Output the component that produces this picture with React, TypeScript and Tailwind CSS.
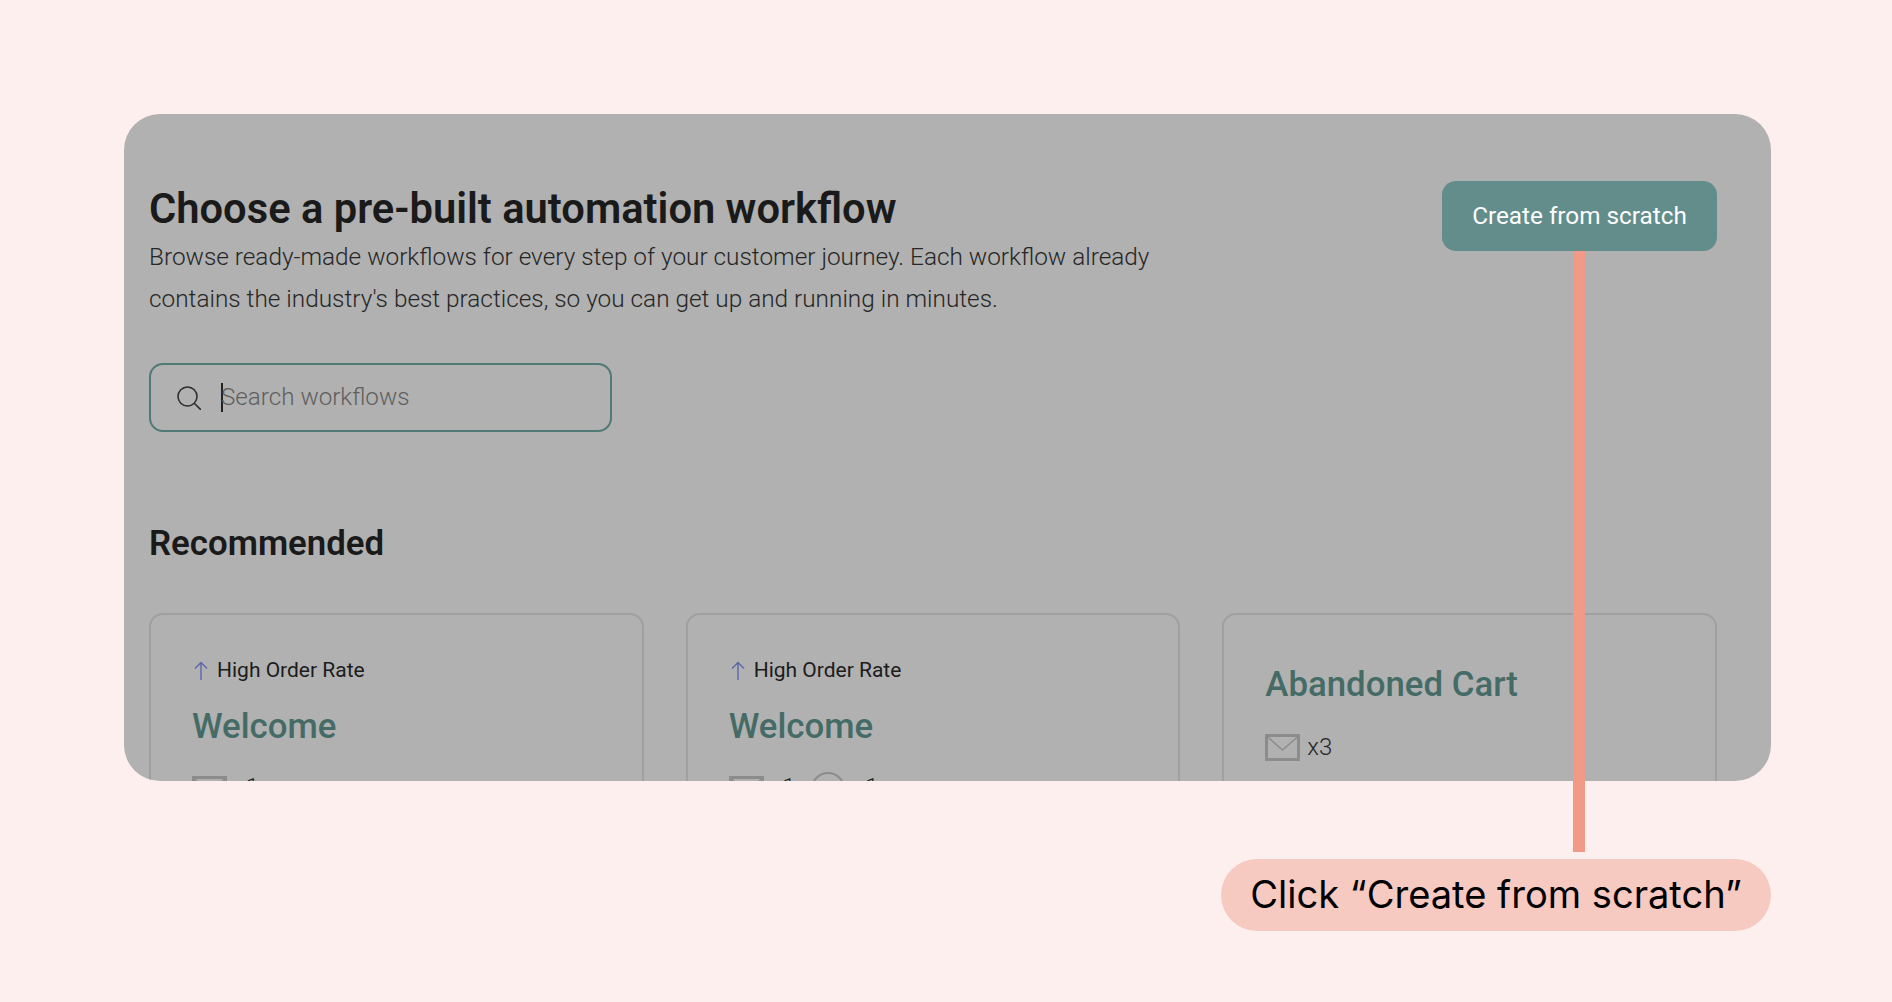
function MailIcon() {
  return (
    <svg width="35" height="27" viewBox="0 0 35 27" fill="none" stroke="#8c8c8c" className="shrink-0">
      <rect x="1.5" y="1.5" width="32" height="24" strokeWidth="3" />
      <path d="M2 2.5 L17.5 16 L33 2.5" strokeWidth="1.5" />
    </svg>
  );
}

function SearchIcon() {
  return (
    <svg width="24" height="24" viewBox="0 0 24 24" fill="none" stroke="#2e2e2e" strokeWidth="1.6" className="shrink-0">
      <circle cx="10.5" cy="10.5" r="9.5" />
      <path d="M17.5 17.5 L23.5 23.5" strokeLinecap="round" />
    </svg>
  );
}

function UpArrow() {
  return (
    <svg width="14" height="20" viewBox="0 0 14 20" fill="none" stroke="#5b67ab" strokeWidth="1.4" className="ml-[2px] shrink-0">
      <path d="M7 19 V1.5 M1 7.5 L7 1.5 L13 7.5" />
    </svg>
  );
}

function Card({
  title,
  badge,
  clock,
  count,
}: {
  title: string;
  badge?: boolean;
  clock?: boolean;
  count: string;
}) {
  return (
    <div className="h-[300px] rounded-[14px] border-2 border-[#a0a0a0] pt-[42px] pl-[41px]">
      {badge ? (
        <div className="mb-[19px] flex h-[28px] items-center gap-[9px] text-[21px] text-[#1c1c1c]">
          <UpArrow />
          <span>High Order Rate</span>
        </div>
      ) : (
        <div className="h-[5px]" />
      )}
      <h3 className="text-[34.8px] leading-[44px] font-medium text-[#456b66]">{title}</h3>
      <div className="mt-[28px] flex items-start gap-[7px]">
        <MailIcon />
        {badge ? (
          <span className="mt-[-2px] text-[24px] leading-[27px] font-light text-[#262626]">{count}</span>
        ) : (
          <span className="text-[24px] leading-[27px] font-light text-[#262626]">{count}</span>
        )}
        {clock && (
          <>
            <div className="mt-[-4px] ml-[8px] h-[34px] w-[34px] rounded-full border-2 border-[#8c8c8c]" />
            <span className="mt-[-2px] ml-[2px] text-[24px] leading-[27px] font-light text-[#262626]">x1</span>
          </>
        )}
      </div>
    </div>
  );
}

export default function App() {
  return (
    <div className="relative flex h-[1002px] flex-col items-end bg-[#fdefed] pt-[114px] pr-[121px] pl-[124px] font-['Roboto',sans-serif]">
      <div className="h-[667px] w-full overflow-hidden rounded-[36px] bg-[#b1b1b1] pt-[67px] pr-[54px] pl-[25px]">
        <div className="flex items-start justify-between">
          <div>
            <h1 className="mt-[3px] text-[41.7px] leading-[50px] font-semibold text-[#1a1a1a]">
              Choose a pre-built automation workflow
            </h1>
            <p className="mt-[2px] w-[1040px] text-[24.35px] leading-[42px] font-light text-[#262626]">
              Browse ready-made workflows for every step of your customer journey. Each workflow already contains the
              industry's best practices, so you can get up and running in minutes.
            </p>
          </div>
          <button className="h-[70px] w-[275px] rounded-[14px] bg-[#628d8b] text-[24.3px] text-[#fdfdfd]">
            Create from scratch
          </button>
        </div>

        <div className="mt-[43px] flex h-[69px] w-[463px] items-center rounded-[14px] border-2 border-[#517a76] pl-[26px]">
          <SearchIcon />
          <div className="ml-[20px] h-[29px] w-[2px] bg-[#222]" />
          <span className="ml-[-2px] text-[24.2px] font-light text-[#5f5f5f]">Search workflows</span>
        </div>

        <h2 className="mt-[89px] text-[34.8px] leading-[44px] font-semibold text-[#1a1a1a]">Recommended</h2>

        <div className="mt-[48px] grid grid-cols-3 gap-[42px]">
          <Card title="Welcome" badge count="x1" />
          <Card title="Welcome" badge clock count="x1" />
          <Card title="Abandoned Cart" count="x3" />
        </div>
      </div>

      {/* Callout line from the button down to the label */}
      <div className="absolute top-[251px] left-[1573px] h-[601px] w-[12px] bg-[#f29a88]" />

      <div className="mt-[78px] flex h-[72px] w-[550px] items-center justify-center rounded-full bg-[#f6c9c1] font-['Inter',sans-serif] text-[38.1px] text-black">
        Click “Create from scratch”
      </div>
    </div>
  );
}
